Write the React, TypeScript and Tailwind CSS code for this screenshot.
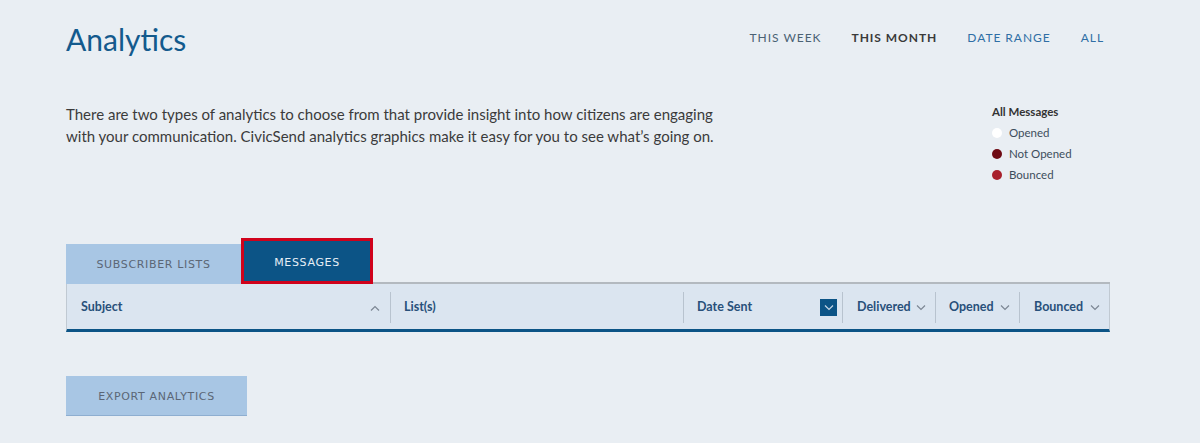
import React from "react";

const Chevron = ({ up = false, className = "" }: { up?: boolean; className?: string }) => (
  <svg width="10" height="6" viewBox="0 0 10 6" className={className} fill="none" stroke="currentColor" strokeWidth="1.2">
    {up ? <path d="M1 5.5 L5 1.5 L9 5.5" /> : <path d="M1 0.5 L5 4.5 L9 0.5" />}
  </svg>
);

const Divider = () => <div className="h-[31px] w-px bg-[#b8c3cf]" />;

export default function App() {
  const legend = [
    { label: "Opened", color: "bg-white" },
    { label: "Not Opened", color: "bg-[#6e0a14]" },
    { label: "Bounced", color: "bg-[#a8202c]" },
  ];

  return (
    <div className="min-h-[443px] w-[1200px] bg-[#e9eef3] font-['Lato',sans-serif] pl-[66px] pr-[90px]">
      <div className="flex items-start justify-between pt-[20px]">
        <h1 className="text-[30px] leading-[38px] text-[#135a8d]">Analytics</h1>
        <nav className="flex gap-[30px] pt-[9px] text-[12px] tracking-[0.08em] pr-[6px]">
          <span className="text-[#4b6274]">THIS WEEK</span>
          <span className="font-bold text-[#3a3a3a]">THIS MONTH</span>
          <span className="text-[#2f6ea5]">DATE RANGE</span>
          <span className="text-[#2f6ea5]">ALL</span>
        </nav>
      </div>

      <div className="mt-[45px] flex justify-between">
        <p className="w-[665px] text-[15px] leading-[22px] text-[#3b3b3b]">
          There are two types of analytics to choose from that provide insight into how citizens are engaging with your communication. CivicSend analytics graphics make it easy for you to see what’s going on.
        </p>
        <div className="w-[118px] pt-[1px] text-[11.5px] text-[#3d4d5c]">
          <div className="font-bold text-[#333] leading-[16px]">All Messages</div>
          <ul className="mt-[5px] flex flex-col gap-[5px]">
            {legend.map((l) => (
              <li key={l.label} className="flex items-center gap-[7px] leading-[16px]">
                <span className={`h-[10px] w-[10px] rounded-full ${l.color}`} />
                {l.label}
              </li>
            ))}
          </ul>
        </div>
      </div>

      <div className="mt-[55px] w-[1044px]">
        <div className="flex items-end font-['DejaVu_Sans',sans-serif] text-[11px] tracking-[0.06em]">
          <div className="flex h-[40px] w-[175px] items-center justify-center bg-[#a8c6e4] pt-[3px] text-[#5b6676]">
            SUBSCRIBER LISTS
          </div>
          <div className="flex h-[46px] w-[132px] items-center justify-center border-[3px] border-[#d0021b] bg-[#0c5486] pt-[4px] text-[#e6eef5]">
            MESSAGES
          </div>
          <div className="flex-1 border-b-2 border-[#b3b9bf]" />
        </div>
        <div className="flex h-[48px] items-center border-x border-[#c0c9d2] border-b-[3px] border-b-[#0c5486] bg-[#dbe5f0] pt-[2px] text-[12.5px] font-bold text-[#28507a]">
          <div className="flex w-[323px] items-center justify-between pl-[14px] pr-[10px]">
            <span>Subject</span>
            <Chevron up className="text-[#7c8794]" />
          </div>
          <Divider />
          <div className="w-[292px] pl-[13px]">List(s)</div>
          <Divider />
          <div className="flex w-[158px] items-center justify-between pl-[13px] pr-[5px]">
            <span>Date Sent</span>
            <span className="flex h-[17px] w-[17px] items-center justify-center bg-[#0c5486]">
              <Chevron className="text-[#c7d7e6]" />
            </span>
          </div>
          <Divider />
          <div className="flex w-[92px] items-center justify-between pl-[14px] pr-[9px]">
            <span>Delivered</span>
            <Chevron className="text-[#7c8794]" />
          </div>
          <Divider />
          <div className="flex w-[83px] items-center justify-between pl-[13px] pr-[9px]">
            <span>Opened</span>
            <Chevron className="text-[#7c8794]" />
          </div>
          <Divider />
          <div className="flex flex-1 items-center justify-between pl-[14px] pr-[9px]">
            <span>Bounced</span>
            <Chevron className="text-[#7c8794]" />
          </div>
        </div>
      </div>

      <button className="mt-[44px] flex h-[40px] w-[181px] items-center justify-center border-b border-[#8eaed0] bg-[#a8c6e4] pt-[3px] font-['DejaVu_Sans',sans-serif] text-[11px] tracking-[0.06em] text-[#5b6676]">
        EXPORT ANALYTICS
      </button>
    </div>
  );
}
